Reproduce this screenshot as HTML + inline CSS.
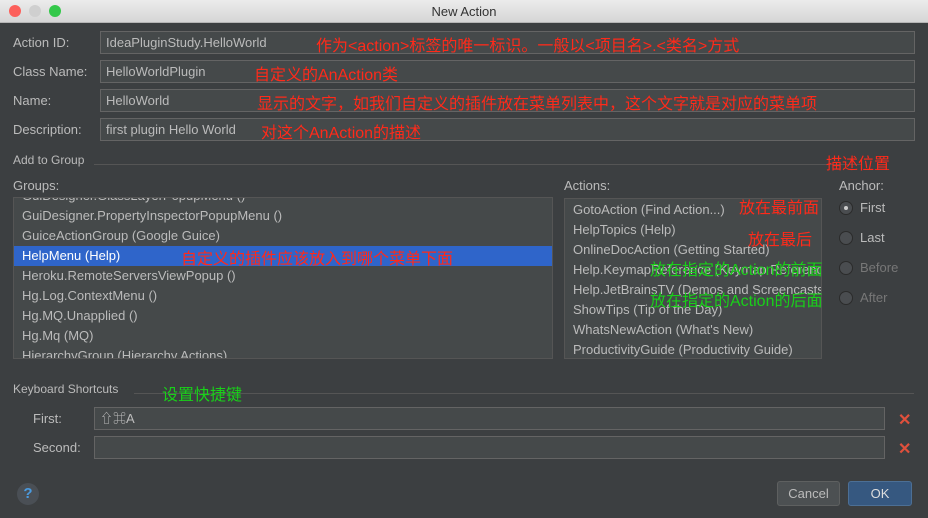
<!DOCTYPE html><html><head><style>
body{margin:0;width:928px;height:518px;background:#3c3f41;font-family:"Liberation Sans","Noto Sans CJK SC",sans-serif;font-size:13px;color:#bbbbbb;position:relative;overflow:hidden}
.a{position:absolute;white-space:nowrap}
.f{position:absolute;background:#45494a;border:1px solid #646464;box-sizing:border-box;color:#bbb;padding-left:5px;line-height:22px}
.r{color:#ff2a1a;font-size:16px}
.g{color:#19d019;font-size:16px}
.rad{position:absolute;width:12px;height:12px;border-radius:50%;background:#4a4d50;border:1px solid #2b2b2b}
</style></head><body>
<div class="a" style="left:0;top:0;width:928px;height:22px;background:linear-gradient(#ececec,#d6d6d6);border-bottom:1px solid #b5b5b5"></div>
<div class="a" style="left:9px;top:5px;width:12px;height:12px;border-radius:50%;background:#fc605b"></div>
<div class="a" style="left:29px;top:5px;width:12px;height:12px;border-radius:50%;background:#cfcfcf"></div>
<div class="a" style="left:49px;top:5px;width:12px;height:12px;border-radius:50%;background:#34c84a"></div>
<div class="a" style="left:0;width:928px;top:4px;text-align:center;color:#333;font-size:13px">New Action</div>

<div class="a" style="left:13px;top:35px">Action ID:</div>
<div class="f" style="left:100px;top:31px;width:815px;height:23px">IdeaPluginStudy.HelloWorld</div>
<div class="a r" style="left:316px;top:32px">作为&lt;action&gt;标签的唯一标识。一般以&lt;项目名&gt;.&lt;类名&gt;方式</div>
<div class="a" style="left:13px;top:64px">Class Name:</div>
<div class="f" style="left:100px;top:60px;width:815px;height:23px">HelloWorldPlugin</div>
<div class="a r" style="left:254px;top:61px">自定义的AnAction类</div>
<div class="a" style="left:13px;top:93px">Name:</div>
<div class="f" style="left:100px;top:89px;width:815px;height:23px">HelloWorld</div>
<div class="a r" style="left:257px;top:90px">显示的文字，如我们自定义的插件放在菜单列表中，这个文字就是对应的菜单项</div>
<div class="a" style="left:13px;top:122px">Description:</div>
<div class="f" style="left:100px;top:118px;width:815px;height:23px">first plugin Hello World</div>
<div class="a r" style="left:261px;top:119px">对这个AnAction的描述</div>

<div class="a" style="left:13px;top:153px;font-size:12px">Add to Group</div>
<div class="a" style="left:94px;top:164px;width:767px;height:1px;background:#555"></div>
<div class="a r" style="left:826px;top:150px">描述位置</div>
<div class="a" style="left:13px;top:178px">Groups:</div>
<div class="a" style="left:13px;top:197px;width:540px;height:162px;background:#45494a;border:1px solid #555;box-sizing:border-box;overflow:hidden">
<div style="line-height:20px;padding-left:8px;margin-top:-12px">GuiDesigner.GlassLayerPopupMenu ()<br>GuiDesigner.PropertyInspectorPopupMenu ()<br>GuiceActionGroup (Google Guice)<br><div style="background:#2f65ca;color:#fff;margin-left:-8px;padding-left:8px">HelpMenu (Help)</div>Heroku.RemoteServersViewPopup ()<br>Hg.Log.ContextMenu ()<br>Hg.MQ.Unapplied ()<br>Hg.Mq (MQ)<br>HierarchyGroup (Hierarchy Actions)</div></div>
<div class="a r" style="left:181px;top:245px">自定义的插件应该放入到哪个菜单下面</div>

<div class="a" style="left:564px;top:178px">Actions:</div>
<div class="a" style="left:564px;top:198px;width:258px;height:161px;background:#45494a;border:1px solid #555;box-sizing:border-box;overflow:hidden">
<div style="line-height:20px;padding-left:8px;margin-top:1px">GotoAction (Find Action...)<br>HelpTopics (Help)<br>OnlineDocAction (Getting Started)<br>Help.KeymapReference (Keymap Reference)<br>Help.JetBrainsTV (Demos and Screencasts)<br>ShowTips (Tip of the Day)<br>WhatsNewAction (What's New)<br>ProductivityGuide (Productivity Guide)</div></div>
<div class="a r" style="left:739px;top:194px">放在最前面</div>
<div class="a r" style="left:748px;top:226px">放在最后</div>
<div class="a g" style="left:650px;top:256px">放在指定的Action的前面</div>
<div class="a g" style="left:650px;top:287px">放在指定的Action的后面</div>

<div class="a" style="left:839px;top:178px">Anchor:</div>
<div class="rad" style="left:839px;top:201px"><div style="width:4px;height:4px;border-radius:50%;background:#ccc;margin:4px"></div></div>
<div class="a" style="left:860px;top:200px">First</div>
<div class="rad" style="left:839px;top:231px"></div><div class="a" style="left:860px;top:230px">Last</div>
<div class="rad" style="left:839px;top:261px"></div><div class="a" style="left:860px;top:260px;color:#777">Before</div>
<div class="rad" style="left:839px;top:291px"></div><div class="a" style="left:860px;top:290px;color:#777">After</div>

<div class="a" style="left:13px;top:382px;font-size:12px">Keyboard Shortcuts</div>
<div class="a" style="left:134px;top:393px;width:780px;height:1px;background:#555"></div>
<div class="a g" style="left:162px;top:381px">设置快捷键</div>
<div class="a" style="left:33px;top:411px">First:</div>
<div class="f" style="left:94px;top:407px;width:791px;height:23px">⇧⌘A</div>
<div class="a" style="left:33px;top:440px">Second:</div>
<div class="f" style="left:94px;top:436px;width:791px;height:23px"></div>
<div class="a" style="left:898px;top:410px;color:#e0503c;font-weight:bold;font-size:16px">✕</div>
<div class="a" style="left:898px;top:439px;color:#e0503c;font-weight:bold;font-size:16px">✕</div>

<div class="a" style="left:17px;top:483px;width:22px;height:22px;border-radius:50%;background:#4a4f55;color:#4a9be0;text-align:center;line-height:22px;font-weight:bold;font-size:15px">?</div>
<div class="a" style="left:777px;top:481px;width:63px;height:25px;background:#4c5052;border:1px solid #5e6060;border-radius:3px;box-sizing:border-box;text-align:center;line-height:23px">Cancel</div>
<div class="a" style="left:848px;top:481px;width:64px;height:25px;background:#365880;border:1px solid #4c6f95;border-radius:3px;box-sizing:border-box;text-align:center;line-height:23px;color:#ddd">OK</div>
</body></html>
